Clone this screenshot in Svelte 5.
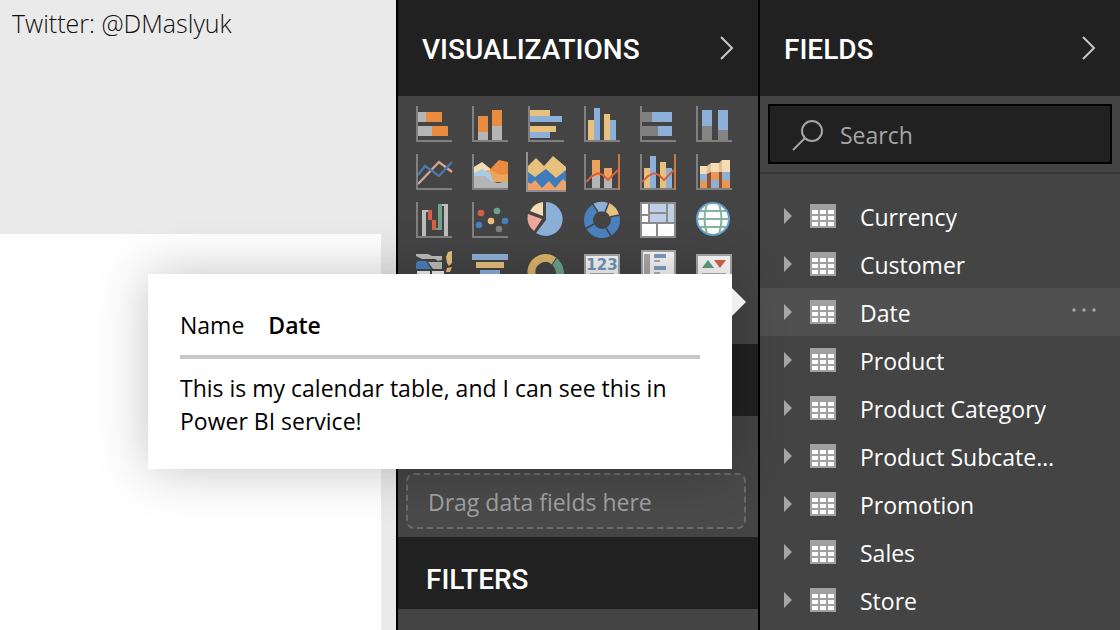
<script>
	const axes = '<path d="M3 2v35h35" fill="none" stroke="#808080" stroke-width="2"/>';
	const trend =
		'<path d="M4 30l6-6 6-3 5 2 5 5 10-10" fill="none" stroke="#d9603b" stroke-width="2"/>';
	const rightAxis = '<path d="M36 2h2v36h-2z" fill="#c77b43"/>';
	const clustered =
		'<path d="M6 16h6v20H6zM22 10h6v26h-6z" fill="#e8c27d"/><path d="M12 4h6v32h-6zM28 16h6v20h-6z" fill="#8db0d9"/>';

	const visuals = [
		{
			name: 'Stacked bar chart',
			art: `<path d="M4 8h8v10H4zM4 22h14v10H4z" fill="#b5b5b5"/><path d="M12 8h16v10H12zM18 22h16v10H18z" fill="#ea8c3f"/>${axes}`
		},
		{
			name: 'Stacked column chart',
			art: `<path d="M8 28h10v8H8zM22 22h10v14H22z" fill="#b5b5b5"/><path d="M8 12h10v16H8zM22 6h10v16H22z" fill="#ea8c3f"/>${axes}`
		},
		{
			name: 'Clustered bar chart',
			art: `<path d="M4 6h20v6H4zM4 22h26v6H4z" fill="#e8c27d"/><path d="M4 12h32v6H4zM4 28h20v6H4z" fill="#8db0d9"/>${axes}`
		},
		{ name: 'Clustered column chart', art: clustered + axes },
		{
			name: '100% stacked bar chart',
			art: `<path d="M4 8h10v10H4zM4 22h16v10H4z" fill="#808080"/><path d="M14 8h20v10H14zM20 22h14v10H20z" fill="#8db0d9"/>${axes}`
		},
		{
			name: '100% stacked column chart',
			art: `<path d="M8 22h10v14H8zM24 26h10v10H24z" fill="#858585"/><path d="M8 6h10v16H8zM24 6h10v20H24z" fill="#8db0d9"/>${axes}`
		},
		{
			name: 'Line chart',
			art: `<path d="M4 32l21-22 13 10" fill="none" stroke="#cfa49a" stroke-width="2.4"/><path d="M4 23l7-9 14 10 13-14" fill="none" stroke="#4a78a8" stroke-width="2.4"/>${axes}`
		},
		{
			name: 'Area chart',
			art: `<path d="M4 15l8-5 10 8v12H4z" fill="#f3dcb4"/><path d="M18 20l7-8 4-4 9 2v15H22z" fill="#ea8c3f"/><path d="M16 18l6 1 8 4 8-1v8H20z" fill="#eba65e"/><path d="M4 21l8-4 8 4 4 9H4z" fill="#a9cbe8"/><path d="M4 24h12l4 5 8 2 10-2v7H4z" fill="#b5b5b5"/>${axes}`
		},
		{
			name: 'Stacked area chart',
			selected: true,
			art: '<path d="M2 14l8-8 8 8 9-10 13 11v6L30 30 20 20 9 28l-7-6z" fill="#e8c27d"/><path d="M2 20l7 5 11-8 10 9 10-8v12L29 38H16L2 32z" fill="#3f7cba"/><path d="M2 30l3 2 4-4 7 8 7-7 6 7 8-9 3 3v8H2z" fill="#eda26b"/><path d="M1 0v39h39" fill="none" stroke="#909090" stroke-width="2"/>'
		},
		{
			name: 'Line and stacked column chart',
			art: `<path d="M10 24h8v12h-8zM22 26h8v10h-8z" fill="#b5b5b5"/><path d="M10 8h8v16h-8zM22 16h8v10h-8z" fill="#eda25c"/>${axes}${rightAxis}${trend}`
		},
		{
			name: 'Line and clustered column chart',
			art: clustered + axes + rightAxis + trend
		},
		{
			name: 'Ribbon chart',
			art: `<path d="M13 22l4-2h8l3 0v16H13z" fill="#8f5132"/><path d="M6 14h7l4-3h8l3-3h8v12H25l-8 0-4 2H6z" fill="#dcc096"/><path d="M6 14h7v8H6zM17 11h8v9h-8zM28 8h8v12h-8z" fill="#f5dcb3"/><path d="M6 22h7v7H6zM17 28h8v8h-8zM28 20h8v8h-8z" fill="#8db0d9"/><path d="M6 29h7v7H6zM17 20h8v8h-8zM28 28h8v8h-8z" fill="#ea9656"/>${axes}`
		},
		{
			name: 'Waterfall chart',
			art: `<path d="M8 10h6v2h-2v24H8zM28 4h6v32h-4V6h-2z" fill="#bdbdbd"/><path d="M14 10h4v10h4v10h-4V20h-4z" fill="#d65f48"/><path d="M24 4h4v26h-6v-2h2z" fill="#6ea38b"/>${axes}`
		},
		{
			name: 'Scatter chart',
			art: `<circle cx="11" cy="13" r="3.3" fill="#d65f48"/><circle cx="27" cy="11" r="3.3" fill="#6ea38b"/><circle cx="9" cy="25" r="3.3" fill="#4a7fbd"/><circle cx="21" cy="21" r="3.3" fill="#e8c27d"/><circle cx="35" cy="21" r="3.3" fill="#4a7fbd"/><circle cx="29" cy="29" r="3.3" fill="#808080"/>${axes}`
		},
		{
			name: 'Pie chart',
			art: '<path d="M20 2a17 17 0 1 1-10 31l10-13z" fill="#8db0d9"/><path d="M17 2v14L4 11A17 17 0 0 1 17 2z" fill="#f5dcb3"/><path d="M2 14l14 5-8 12a17 17 0 0 1-6-17z" fill="#eda99c"/>'
		},
		{
			name: 'Donut chart',
			art: '<circle cx="20" cy="20" r="13.5" fill="none" stroke="#4a82bf" stroke-width="9"/><path d="M11 4a18 18 0 0 1 15-1l-3 9a9 9 0 0 0-7 0z" fill="#8db0d9"/><path d="M27 3a18 18 0 0 1 10 12l-9 2a9 9 0 0 0-4-5z" fill="#e8c27d"/><path d="M10 3l6 9M27 2l-4 10M28 17l9-2M12 24l-9 5M24 28l5 8" stroke="#444" stroke-width="1.5"/>'
		},
		{
			name: 'Treemap',
			art: '<path d="M2 2h36v36H2z" fill="#8c8c8c"/><path d="M4 4h6v10H4zM4 16h6v6H4zM4 24h14v12H4zM20 24h16v12H20z" fill="#fff"/><path d="M12 4h16v8H12zM12 14h16v8H12zM30 4h6v18h-6z" fill="#bdd0e8"/>'
		},
		{
			name: 'Map',
			art: '<circle cx="19" cy="19" r="16" fill="#fff" stroke="#5fa0cc" stroke-width="2"/><path d="M6 11h26M3 19h32M6 27h26M13 4Q8 19 13 34M25 4q5 15 0 30" fill="none" stroke="#86b39d" stroke-width="2"/>'
		},
		{
			name: 'Filled map',
			art: '<path d="M2 6h12l4 2h10v4l-4 1-3-2H8L2 8z" fill="#bdbdbd"/><path d="M4 13h8l5 8H2v-6z" fill="#4a82bf"/><path d="M14 14h14v7H19z" fill="#bdbdbd"/><path d="M3 23h13v6H3zM18 23h12v6H18z" fill="#f0f0f0"/><path d="M34 4l4-1v12l-3 3-2-3-1-6z" fill="#e8c27d"/><path d="M33 20l5-1-2 5h-4z" fill="#e8c27d"/>'
		},
		{
			name: 'Funnel',
			art: '<path d="M2 6h36v6H2zM10 22h20v6H10z" fill="#8db0d9"/><path d="M6 14h28v6H6z" fill="#e8c27d"/>'
		},
		{
			name: 'Gauge',
			art: '<path d="M6 28a14 14 0 0 1 22-15" fill="none" stroke="#dcb569" stroke-width="8"/><path d="M28 13q7 6 6 15" fill="none" stroke="#6ea38b" stroke-width="8"/><path d="M26 17l5-8" stroke="#444" stroke-width="1"/>'
		},
		{
			name: 'Card',
			art: '<path d="M3 7h34v30H3z" fill="#f7f7f7" stroke="#a5a5a5" stroke-width="2"/><text x="20" y="22" text-anchor="middle" font-family="DejaVu Sans" font-size="15" font-weight="bold" fill="#6f96bd">123</text><path d="M8 26h24" stroke="#aaa" stroke-width="2"/>'
		},
		{
			name: 'Multi-row card',
			art: '<path d="M4 3h33v34H4z" fill="#f7f7f7" stroke="#a5a5a5" stroke-width="2"/><path d="M6 6h6v30H6z" fill="#a8a8a8"/><path d="M16 6h12v4H16zM16 18h12v4H16z" fill="#7d9dc0"/><path d="M16 12h6v2h-6zM16 24h6v2h-6z" fill="#b0b0b0"/>'
		},
		{
			name: 'KPI',
			art: '<path d="M3 7h34v30H3z" fill="#f7f7f7" stroke="#a5a5a5" stroke-width="2"/><path d="M8 20l6-8 6 8z" fill="#5f9c80"/><path d="M20 12h12l-6 8z" fill="#d65f48"/><path d="M8 26h24" stroke="#aaa" stroke-width="2"/>'
		}
	];

	const tables = [
		'Currency',
		'Customer',
		'Date',
		'Product',
		'Product Category',
		'Product Subcategory',
		'Promotion',
		'Sales',
		'Store'
	];
	const hovered = 'Date';
	let search = '';
</script>

{#snippet chevron()}
	<svg width="16" height="24" viewBox="0 0 16 24">
		<path d="M2 1l11 11L2 23" fill="none" stroke="#c8c8c8" stroke-width="2" />
	</svg>
{/snippet}

<div class="workspace">
	<main class="canvas">
		<p class="credit">Twitter: @DMaslyuk</p>
		<div class="page"></div>
	</main>

	<aside class="pane">
		<header class="paneHeader">
			<h2>VISUALIZATIONS</h2>
			<button class="collapse" aria-label="Collapse visualizations">{@render chevron()}</button>
		</header>
		<div class="gallery">
			{#each visuals as visual}
				<button class="visual" aria-label={visual.name} aria-pressed={!!visual.selected}>
					<svg width="40" height="40" viewBox="0 0 40 40">{@html visual.art}</svg>
				</button>
			{/each}
		</div>
		<div class="sectionHeader"></div>
		<div class="well">
			<div class="dropZone">Drag data fields here</div>
		</div>
		<div class="sectionHeader"><h2>FILTERS</h2></div>
	</aside>

	<aside class="pane">
		<header class="paneHeader">
			<h2>FIELDS</h2>
			<button class="collapse" aria-label="Collapse fields">{@render chevron()}</button>
		</header>
		<div class="searchArea">
			<label class="search">
				<svg width="32" height="32" viewBox="0 0 32 32">
					<circle cx="20" cy="12" r="10" fill="none" stroke="#a6a6a6" stroke-width="2" />
					<path d="M13 19L1 31" stroke="#a6a6a6" stroke-width="2" />
				</svg>
				<input type="text" placeholder="Search" aria-label="Search" bind:value={search} />
			</label>
		</div>
		<ul class="tables">
			{#each tables as table}
				<li class="row {table === hovered ? 'hovered' : ''}">
					<button class="table">
						<svg class="arrow" width="8" height="16" viewBox="0 0 8 16">
							<path d="M0 0l8 8-8 8z" fill="#a6a6a6" />
						</svg>
						<svg class="grid" width="26" height="24" viewBox="0 0 26 24">
							<path d="M0 0h26v24H0z" fill="#a0a0a0" />
							<path
								d="M2 6h6v4H2zM10 6h6v4h-6zM18 6h6v4h-6zM2 12h6v4H2zM10 12h6v4h-6zM18 12h6v4h-6zM2 18h6v4H2zM10 18h6v4h-6zM18 18h6v4h-6z"
								fill="#fff"
							/>
						</svg>
						<span class="name">{table}</span>
					</button>
					{#if table === hovered}
						<button class="more" aria-label="More options">
							<svg width="24" height="4" viewBox="0 0 24 4">
								<circle cx="2" cy="2" r="1.7" fill="#a6a6a6" />
								<circle cx="12" cy="2" r="1.7" fill="#a6a6a6" />
								<circle cx="22" cy="2" r="1.7" fill="#a6a6a6" />
							</svg>
						</button>
						<div class="tooltip" role="tooltip">
							<div class="title">
								<span>Name</span>
								<strong>Date</strong>
							</div>
							<p>This is my calendar table, and I can see this in Power BI service!</p>
						</div>
					{/if}
				</li>
			{/each}
		</ul>
	</aside>
</div>

<style>
	:global(body) {
		overflow: hidden;
	}
	.workspace {
		display: grid;
		grid-template-columns: minmax(0, 1fr) 362px 362px;
		min-height: 100vh;
		font-family: 'Open Sans', 'Noto Sans', sans-serif;
		font-size: 23px;
		line-height: 32px;
		color: #fff;
	}
	h2,
	p,
	ul {
		margin: 0;
		padding: 0;
	}
	button {
		display: flex;
		align-items: center;
		padding: 0;
		border: 0;
		background: none;
		color: inherit;
		font: inherit;
		cursor: pointer;
	}
	svg {
		display: block;
		flex-shrink: 0;
	}
	.canvas {
		display: flex;
		flex-direction: column;
		background: #eaeaea;
	}
	.credit {
		box-sizing: border-box;
		height: 234px;
		padding: 7px 12px;
		color: #111;
		font-size: 25px;
		font-weight: 300;
	}
	.page {
		flex: 1;
		margin-right: 15px;
		background: #fff;
	}
	.pane {
		border-left: 2px solid #000;
		background: #444;
	}
	.paneHeader {
		display: flex;
		align-items: center;
		justify-content: space-between;
		box-sizing: border-box;
		height: 96px;
		padding: 0 23px 0 24px;
		background: #212121;
	}
	h2 {
		padding-top: 3px;
		font-family: Roboto, sans-serif;
		font-size: 28px;
		font-weight: 500;
	}
	.gallery {
		display: grid;
		grid-template-columns: repeat(6, 40px);
		gap: 8px 16px;
		box-sizing: border-box;
		height: 248px;
		padding: 8px 16px;
		align-content: start;
	}
	.sectionHeader {
		display: flex;
		align-items: center;
		box-sizing: border-box;
		height: 72px;
		padding: 10px 28px 0;
		background: #212121;
	}
	.well {
		padding: 57px 12px 8px 8px;
	}
	.dropZone {
		box-sizing: border-box;
		height: 56px;
		padding: 11px 20px;
		border: 2px dashed #6a6a6a;
		border-radius: 8px;
		background: #4a4a4a;
		color: #a0a0a0;
	}
	.searchArea {
		padding: 8px;
		border-bottom: 2px solid #363636;
	}
	.search {
		display: flex;
		align-items: center;
		gap: 16px;
		box-sizing: border-box;
		height: 60px;
		padding: 2px 22px 0;
		border: 2px solid #000;
		background: #212121;
	}
	.search input {
		flex: 1;
		min-width: 0;
		padding: 0;
		border: 0;
		outline: 0;
		background: none;
		color: #fff;
		font: inherit;
	}
	.search input::placeholder {
		color: #a6a6a6;
		opacity: 1;
	}
	.tables {
		padding-top: 18px;
		list-style: none;
	}
	.row {
		position: relative;
		display: flex;
		align-items: center;
		height: 48px;
		padding: 0 24px;
	}
	.hovered {
		background: #505050;
	}
	.table {
		width: 276px;
	}
	.grid {
		margin: 0 24px 0 18px;
	}
	.name {
		overflow: hidden;
		padding-top: 2px;
		text-align: left;
		text-overflow: ellipsis;
		white-space: nowrap;
	}
	.more {
		margin-left: auto;
		padding-bottom: 4px;
	}
	.tooltip {
		position: absolute;
		top: -14px;
		right: calc(100% + 28px);
		z-index: 1;
		box-sizing: border-box;
		width: 584px;
		padding: 35px 32px 31px;
		background: #fff;
		box-shadow: 0 0 50px rgba(0, 0, 0, 0.24);
		color: #000;
		line-height: 33px;
	}
	.tooltip:after {
		content: '';
		position: absolute;
		top: 14px;
		left: 100%;
		border: 14px solid transparent;
		border-right: 0;
		border-left-color: #f0f0f0;
	}
	.title {
		display: flex;
		gap: 24px;
		padding-bottom: 13px;
		border-bottom: 4px solid #c8c8c8;
	}
	.title strong {
		font-weight: 600;
	}
	.tooltip p {
		padding-top: 13px;
	}
</style>
